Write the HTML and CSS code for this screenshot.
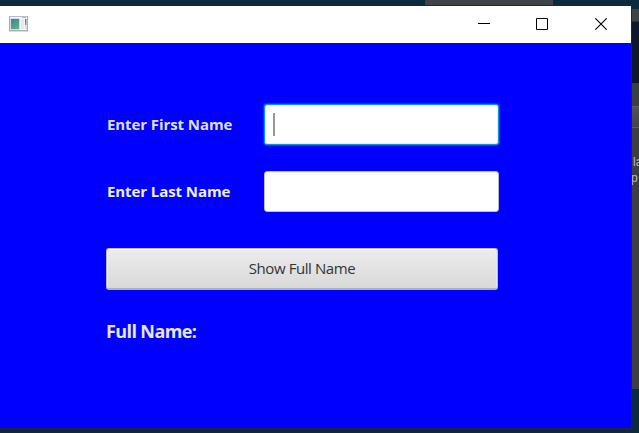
FILE: index.html
```html
<!DOCTYPE html>
<html lang="en">
<head>
<meta charset="utf-8">
<title>Full Name</title>
<link rel="stylesheet" href="styles.css">
</head>
<body>
<div class="desktop">
  <div class="back-tab"></div>
  <div class="back-window">
    <div class="back-menu"></div>
    <div class="back-dark"></div>
    <div class="back-header"></div>
    <div class="back-tool"></div>
    <div class="back-body"><span>la</span><span class="second">p</span></div>
  </div>
  <main class="window">
    <header class="titlebar">
      <svg class="app-icon" width="19" height="16" viewBox="0 0 19 16">
        <defs><linearGradient id="pane" x1="0" y1="0" x2=".5" y2="1"><stop offset="0" stop-color="#437f9f"/><stop offset="1" stop-color="#58ae83"/></linearGradient></defs>
        <path fill="#d8dadd" d="M0 15h19v1H0z"/>
        <path fill="#a9adb5" d="M0 0h19v15H0z"/>
        <path fill="#f5f6f7" d="M1 1h17v13H1z"/>
        <path fill="#b4bcc7" d="M1 0h17v1H1zM13 1h4v1h-4z"/>
        <path fill="#b5c3cb" d="M1.500 2.500h9v11h-9z"/>
        <path fill="url(#pane)" d="M2 3h8v10H2z"/>
        <path fill="#e6e8e9" d="M12 3h3v10h-3z"/>
        <path fill="url(#pane)" d="M16 3h1.500v6H16z"/>
        <path fill="#dfe2e5" d="M16 9h2v4h-2z"/>
      </svg>
      <div class="controls">
        <svg class="minimize" width="12" height="12" viewBox="0 0 12 12"><path d="M0 5.500h12"/></svg>
        <svg width="12" height="12" viewBox="0 0 12 12"><path d="M.5.500h11v11H.5z"/></svg>
        <svg width="12" height="12" viewBox="0 0 12 12"><path class="cross" d="M.3.300l11.400 11.400M11.700.300L.3 11.700"/></svg>
      </div>
    </header>
    <section class="form">
      <div class="row first">
        <span class="label">Enter First Name</span>
        <div class="field focused"><i class="caret"></i></div>
      </div>
      <div class="row last">
        <span class="label lower">Enter Last Name</span>
        <div class="field"></div>
      </div>
      <div class="button" role="button"><span>Show Full Name</span></div>
      <div class="result"><span>Full Name:</span></div>
    </section>
  </main>
</div>
</body>
</html>
```
FILE: styles.css
```css
* { box-sizing: border-box; }
body { margin: 0; font-family: "Open Sans", "Noto Sans", sans-serif; }
.desktop {
  position: relative;
  width: 639px;
  height: 433px;
  overflow: hidden;
  background: #0d293d;
}
.back-tab {
  position: absolute;
  left: 425px;
  top: 0;
  width: 128px;
  height: 6px;
  background: #3f444b;
}
.back-window {
  position: absolute;
  left: 631px;
  top: 9px;
  width: 8px;
  height: 380px;
  display: flex;
  flex-direction: column;
  background: #3c3f41;
}
.back-menu { height: 12px; background: #3f4346; }
.back-dark { height: 62px; background: #11172b; border-top: 1px solid #1c344c; }
.back-header { height: 23px; }
.back-tool { height: 22px; background: linear-gradient(#505456, #424548); border: solid #5b5f61; border-width: 1px 0; }
.back-body { padding: 26px 0 0 2px; font: 12px/16px "Liberation Sans", sans-serif; color: #bbb; }
.back-body span { display: block; }
.back-body .second { margin-left: -2px; }
.window {
  position: absolute;
  left: 0;
  top: 6px;
  width: 631px;
  height: 422px;
  background: #00f;
  box-shadow: 0 0 0 1px #20253a;
}
.titlebar {
  display: flex;
  align-items: flex-start;
  justify-content: space-between;
  height: 37px;
  padding: 10px 24px 0 9px;
  background: #fff;
}
.controls { display: flex; gap: 47px; padding-top: 2px; }
.controls svg { display: block; fill: none; stroke: #000; stroke-width: 1; }
.controls .minimize { margin-right: -1px; }
.controls .cross { stroke-width: 1.1; }
.form { width: 393px; margin-left: 106px; padding-top: 61px; }
.row { display: flex; justify-content: space-between; align-items: center; height: 41px; }
.last { margin-top: 26px; }
.label {
  margin-left: 1px;
  padding-bottom: 2px;
  font-size: 15px;
  line-height: 20px;
  font-weight: 700;
  letter-spacing: -0.08px;
  color: #dfdfe4;
  white-space: nowrap;
}
.lower { color: #eeeef4; }
.field {
  width: 235px;
  height: 41px;
  border: 1px solid #bdbdc4;
  border-radius: 3px;
  background: linear-gradient(#f5f5f5, #fff 4px);
}
.focused {
  padding: 8px;
  border-color: #0396d8;
  background: #fff;
  box-shadow: 0 0 1px 1px rgba(3, 150, 216, .4), inset 0 0 0 1px #d9effa;
}
.caret { display: block; width: 2px; height: 23px; background: #969696; }
.button {
  display: flex;
  align-items: center;
  justify-content: center;
  width: 392px;
  height: 42px;
  margin-top: 36px;
  padding-bottom: 1px;
  border: 1px solid #b9b9bf;
  border-bottom: 2px solid #b0b0b3;
  border-radius: 3px;
  background: linear-gradient(#ececec, #d9d9d9);
  box-shadow: inset 0 1px #fafafa, inset 1px 0 #f0f0f0, inset -1px 0 #e8e8e8;
  font-size: 15px;
  line-height: 20px;
  letter-spacing: -0.42px;
  color: #333;
}
.result {
  margin-top: 29px;
  font-size: 18px;
  line-height: 24px;
  font-weight: 700;
  letter-spacing: -0.6px;
  color: #e6e6f5;
}
```
